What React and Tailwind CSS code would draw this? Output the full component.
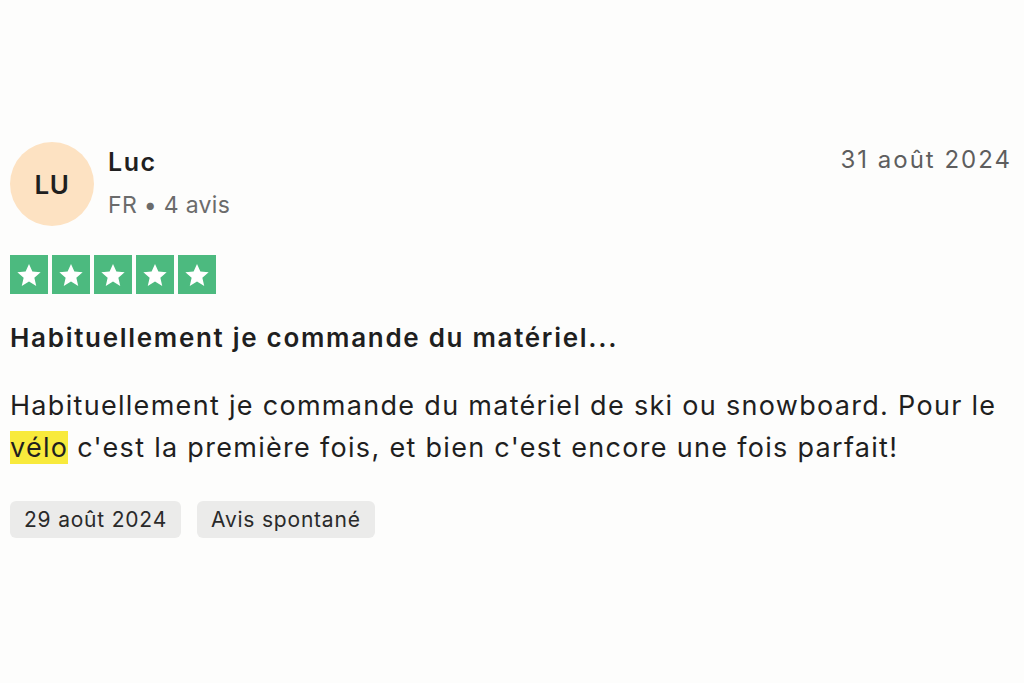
import React from 'react';

// Review card, single customer review
const Star = () => (
  <div className="w-[38px] h-[39px] bg-[#4cba7f] flex items-center justify-center">
    <svg viewBox="0 0 24 24" className="w-[28px] h-[28px]" fill="#fff">
      <path d="M12 2.5l2.9 6.6 7.1.6-5.4 4.7 1.6 7-6.2-3.8-6.2 3.8 1.6-7L2 9.7l7.1-.6z" />
    </svg>
  </div>
);

export default function App() {
  return (
    <div className="w-[1024px] h-[683px] bg-[#fdfdfc] text-[#1f1f1f] font-['Inter',sans-serif] pl-[10px] pr-[12px] pt-[142px]">
      {/* Header */}
      <div className="flex items-start justify-between">
        <div className="flex items-start gap-4">
          <div className="w-[84px] h-[84px] rounded-full bg-[#fde2c2] flex items-center justify-center text-[26px] font-semibold text-[#1f1f1f] tracking-[0.5px]">
            LU
          </div>
          <div className="flex flex-col mt-[2px]">
            <span className="text-[25px] leading-[36px] font-semibold tracking-[1.5px] -ml-[2px]">Luc</span>
            <span className="mt-[8px] text-[23px] leading-[34px] text-[#6b6b6b] tracking-[0.3px] -ml-[2px]">FR • 4 avis</span>
          </div>
        </div>
        <span className="text-[24px] leading-[34px] text-[#5e5e5e] mt-[1px] tracking-[2px]">31 août 2024</span>
      </div>

      {/* Rating */}
      <div className="flex gap-[4px] mt-[29px]">
        <Star />
        <Star />
        <Star />
        <Star />
        <Star />
      </div>

      {/* Title */}
      <h2 className="mt-[27px] text-[26px] leading-[34px] font-semibold tracking-[1.7px]">
        Habituellement je commande du matériel...
      </h2>

      {/* Body */}
      <p className="mt-[30px] text-[27px] leading-[42px] text-[#1f1f1f] tracking-[1.3px]">
        Habituellement je commande du matériel de ski ou snowboard. Pour le{' '}
        <span className="bg-[#f8ea3c]">vélo</span> c'est la première fois, et bien c'est encore une fois parfait!
      </p>

      {/* Tags */}
      <div className="flex gap-4 mt-[32px]">
        <span className="bg-[#ebebea] rounded-md px-[14px] h-[37px] flex items-center text-[21px] text-[#2a2a2a] tracking-[0.8px]">
          29 août 2024
        </span>
        <span className="bg-[#ebebea] rounded-md px-[14px] h-[37px] flex items-center text-[21px] text-[#2a2a2a] tracking-[0.8px]">
          Avis spontané
        </span>
      </div>
    </div>
  );
}
